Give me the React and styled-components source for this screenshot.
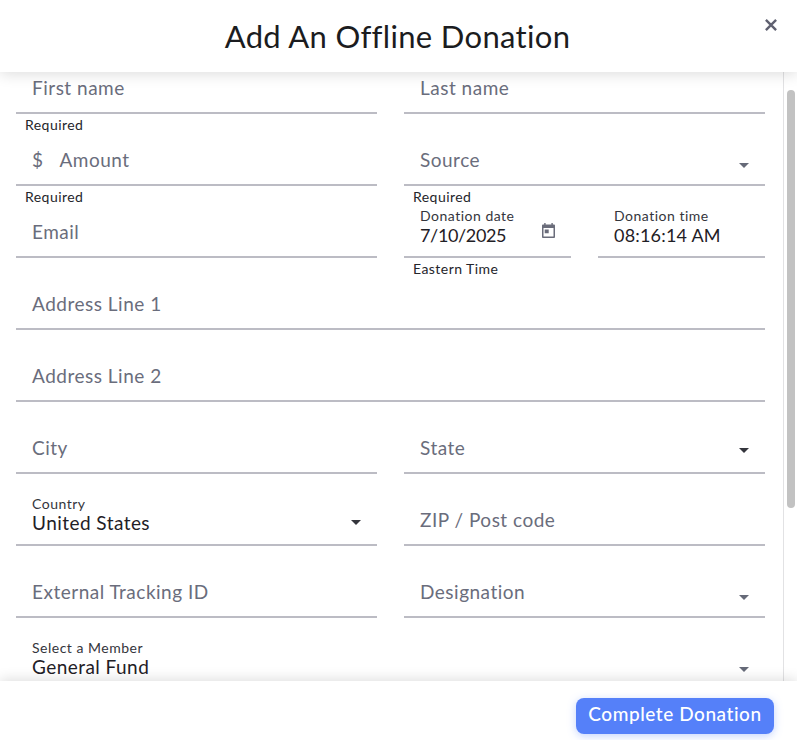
import styled, {createGlobalStyle} from "styled-components";

const GlobalStyle = createGlobalStyle`
    html, body {
        margin: 0;
        padding: 0;
        background: #fff;
    }
    * {
        box-sizing: border-box;
    }
`;

const Modal = styled.div`
    width: 797px;
    height: 740px;
    display: flex;
    flex-direction: column;
    overflow: hidden;
    font-family: "Lato", "Noto Sans", sans-serif;
    background: #fff;
`;

const Header = styled.header`
    position: relative;
    z-index: 2;
    height: 72px;
    flex: none;
    display: flex;
    align-items: center;
    justify-content: center;
    padding-right: 2px;
    background: #fff;
    box-shadow: 0 2px 14px rgba(0, 0, 0, 0.14);
`;

const Title = styled.h1`
    margin: 0;
    font-size: 31px;
    font-weight: 400;
    letter-spacing: 0.33px;
    color: #1b1c20;
`;

const CloseButton = styled.button`
    position: absolute;
    top: 18px;
    right: 19px;
    width: 14px;
    height: 14px;
    padding: 0;
    border: 0;
    background: none;
    display: flex;
    color: #5f6070;
`;

const Body = styled.div`
    flex: 1;
    min-height: 0;
    display: flex;
`;

const Scroller = styled.div`
    flex: 1;
    overflow: hidden;
    padding: 0 18px 0 16px;
`;

const Track = styled.div`
    width: 14px;
    flex: none;
    border-left: 1px solid #e2e2e4;
    padding: 18px 2px 0 3px;
`;

const Thumb = styled.div`
    height: 418px;
    border-radius: 4px;
    background: #c2c2c2;
`;

const Form = styled.form`
    margin-top: -14px;
    display: grid;
    grid-template-columns: 361px 361px;
    column-gap: 27px;
    grid-auto-rows: 56px;
    row-gap: 16px;
`;

const Field = styled.div`
    position: relative;
    grid-column: ${(props) => (props.$wide ? "1 / -1" : "auto")};
    display: flex;
    flex-direction: column;
    justify-content: flex-end;
    padding: 0 16px ${(props) => (props.$filled ? "9px" : "12px")};
    border-bottom: 2px solid #bcbcc4;
`;

const Placeholder = styled.span`
    display: flex;
    gap: 16px;
    font-size: 19px;
    line-height: 24px;
    letter-spacing: 0.5px;
    color: #6a6d7c;
`;

const Label = styled.label`
    font-size: 14px;
    line-height: 15px;
    letter-spacing: 0.5px;
    color: #34353c;
`;

const Value = styled.span`
    font-size: ${(props) => props.$size || 19}px;
    line-height: 24px;
    letter-spacing: ${(props) => props.$spacing ?? 0.45}px;
    color: #1f2026;
`;

const Helper = styled.span`
    position: absolute;
    left: 9px;
    top: 100%;
    margin-top: 5px;
    font-size: 14px;
    line-height: 16px;
    letter-spacing: 0.45px;
    color: #24252b;
`;

const Arrow = styled.span`
    position: absolute;
    right: 16px;
    bottom: ${(props) => props.$bottom}px;
    width: 0;
    height: 0;
    border-left: 5px solid transparent;
    border-right: 5px solid transparent;
    border-top: 5px solid ${(props) => props.$color};
`;

const DateRow = styled.div`
    display: grid;
    grid-template-columns: 167px 167px;
    column-gap: 27px;
`;

const CalendarIcon = styled.svg`
    position: absolute;
    right: 16px;
    bottom: 18px;
    width: 13px;
    height: 15px;
    color: #6a6c7a;
`;

const Footer = styled.footer`
    position: relative;
    z-index: 2;
    height: 59px;
    flex: none;
    display: flex;
    justify-content: flex-end;
    padding: 17px 23px 0 0;
    background: #fff;
    box-shadow: 0 -2px 12px rgba(0, 0, 0, 0.13);
`;

const SubmitButton = styled.button`
    width: 198px;
    height: 36px;
    padding: 0 0 5px;
    border: 0;
    border-radius: 8px;
    background: #5580f9;
    color: #fff;
    font-family: inherit;
    font-size: 19px;
    font-weight: 500;
    letter-spacing: 0.55px;
    box-shadow: 0 2px 8px rgba(85, 128, 249, 0.35);
`;

const SelectField = ({label, value, placeholder, bottom, color = "#666a78", helper, wide}) => (
    <Field $wide={wide} $filled={Boolean(value)}>
        {label ? <Label>{label}</Label> : null}
        {value ? <Value>{value}</Value> : <Placeholder>{placeholder}</Placeholder>}
        <Arrow $bottom={bottom} $color={color} />
        {helper ? <Helper>{helper}</Helper> : null}
    </Field>
);

const TextField = ({placeholder, prefix, helper, wide}) => (
    <Field $wide={wide}>
        <Placeholder>
            {prefix ? <span>{prefix}</span> : null}
            {placeholder}
        </Placeholder>
        {helper ? <Helper>{helper}</Helper> : null}
    </Field>
);

const App = () => {
    return (
        <Modal>
            <GlobalStyle />
            <Header>
                <Title>Add An Offline Donation</Title>
                <CloseButton type="button" aria-label="Close">
                    <svg width="14" height="14" viewBox="0 0 14 14">
                        <path d="M1.9 1.900l10.200 10.200M12.100 1.900L1.900 12.100" stroke="currentColor" strokeWidth="2.4" fill="none" />
                    </svg>
                </CloseButton>
            </Header>
            <Body>
                <Scroller>
                    <Form>
                        <TextField placeholder="First name" helper="Required" />
                        <TextField placeholder="Last name" />
                        <TextField placeholder="Amount" prefix="$" helper="Required" />
                        <SelectField placeholder="Source" bottom={16} helper="Required" />
                        <TextField placeholder="Email" />
                        <DateRow>
                            <Field $filled>
                                <Label>Donation date</Label>
                                <Value $size={18} $spacing={-0.35}>7/10/2025</Value>
                                <CalendarIcon viewBox="0 0 13 15">
                                    <path
                                        fill="currentColor"
                                        fillRule="evenodd"
                                        d="M2.200 0h1.400v1.500h5.800V0h1.400v1.500h1.200c.5 0 1 .5 1 1V14c0 .5-.5 1-1 1H1c-.5 0-1-.5-1-1V2.500c0-.5.5-1 1-1h1.200V0zM1.500 5v8.500h10V5h-10zm1.200 1.500h4v3.700h-4V6.500z"
                                    />
                                </CalendarIcon>
                                <Helper>Eastern Time</Helper>
                            </Field>
                            <Field $filled>
                                <Label>Donation time</Label>
                                <Value $size={18} $spacing={0.2}>08:16:14 AM</Value>
                            </Field>
                        </DateRow>
                        <TextField placeholder="Address Line 1" wide />
                        <TextField placeholder="Address Line 2" wide />
                        <TextField placeholder="City" />
                        <SelectField placeholder="State" bottom={19} color="#34353c" />
                        <SelectField label="Country" value="United States" bottom={19} color="#34353c" />
                        <TextField placeholder="ZIP / Post code" />
                        <TextField placeholder="External Tracking ID" />
                        <SelectField placeholder="Designation" bottom={16} />
                        <SelectField label="Select a Member" value="General Fund" bottom={16} wide />
                    </Form>
                </Scroller>
                <Track>
                    <Thumb />
                </Track>
            </Body>
            <Footer>
                <SubmitButton type="button">Complete Donation</SubmitButton>
            </Footer>
        </Modal>
    );
};

export default App;
